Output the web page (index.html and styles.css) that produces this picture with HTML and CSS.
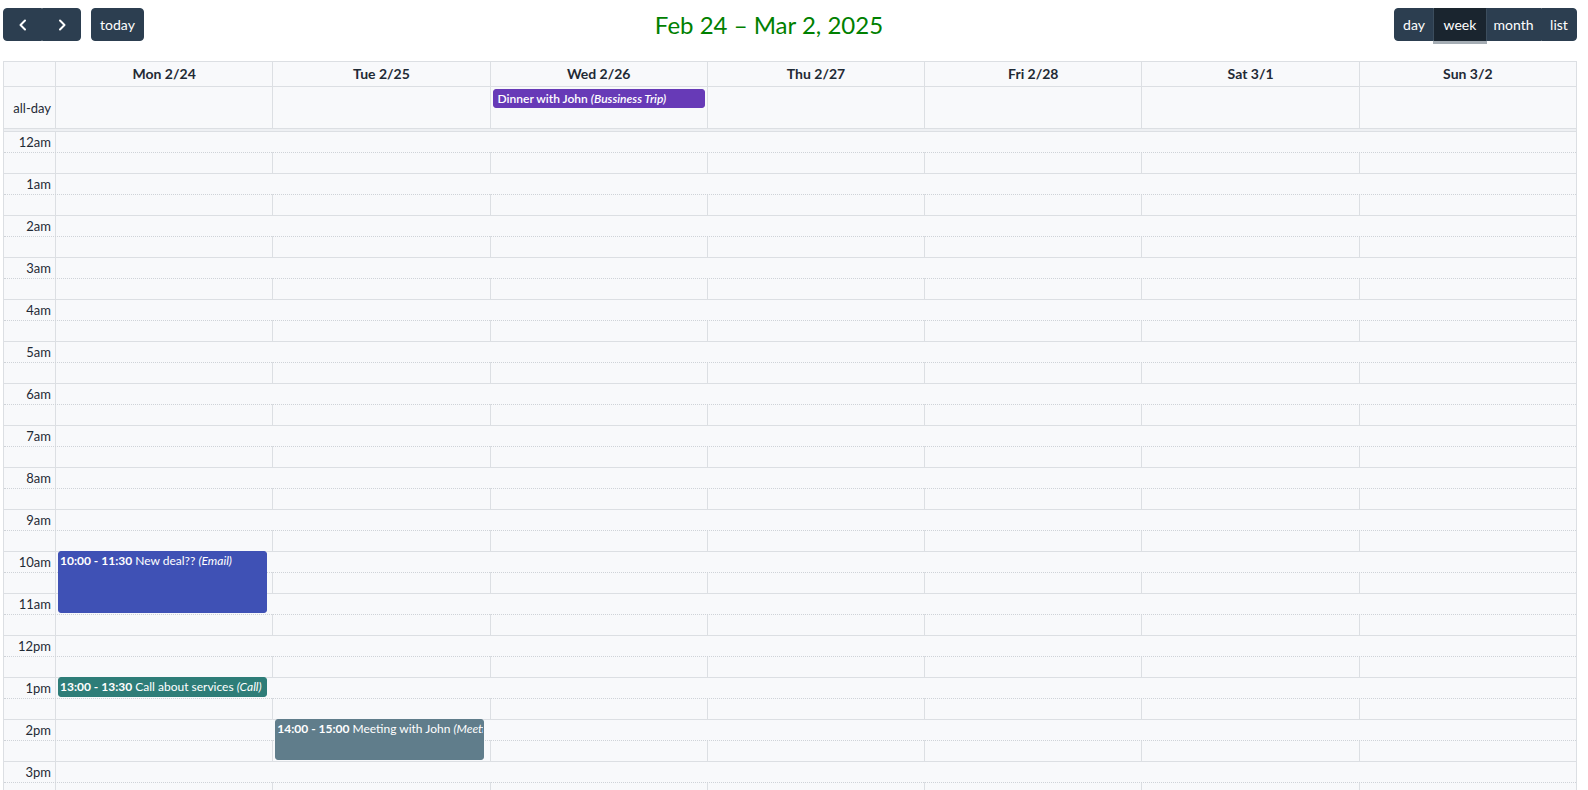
FILE: index.html
```html
<!DOCTYPE html>
<html lang="en">
<head>
<meta charset="utf-8">
<title>Calendar – Week</title>
<link rel="stylesheet" href="styles.css">
</head>
<body>
<div class="page">
  <div class="toolbar">
    <div class="chunk">
      <div class="btn-group">
        <button class="btn btn-icon" aria-label="prev"><svg width="10" height="12" viewBox="0 0 10 12"><polyline points="7,1.5 2.5,6 7,10.5"/></svg></button>
        <button class="btn btn-icon" aria-label="next"><svg width="10" height="12" viewBox="0 0 10 12"><polyline points="3,1.5 7.5,6 3,10.5"/></svg></button>
      </div>
      <button class="btn btn-today">today</button>
    </div>
    <h2 class="title">Feb 24 – Mar 2, 2025</h2>
    <div class="btn-group">
      <button class="btn btn-day">day</button>
      <button class="btn btn-week active">week</button>
      <button class="btn btn-month">month</button>
      <button class="btn btn-list">list</button>
    </div>
  </div>

  <div class="cal">
    <div class="row head">
      <div class="axis"></div>
      <div class="cell day-head">Mon 2/24</div>
      <div class="cell day-head">Tue 2/25</div>
      <div class="cell day-head">Wed 2/26</div>
      <div class="cell day-head">Thu 2/27</div>
      <div class="cell day-head">Fri 2/28</div>
      <div class="cell day-head">Sat 3/1</div>
      <div class="cell day-head">Sun 3/2</div>
    </div>
    <div class="row allday">
      <div class="axis axis-label">all-day</div>
      <div class="cell"></div>
      <div class="cell"></div>
      <div class="cell"><div class="ad-event ev-purple">Dinner with John <i>(Bussiness Trip)</i></div></div>
      <div class="cell"></div>
      <div class="cell"></div>
      <div class="cell"></div>
      <div class="cell"></div>
    </div>
    <div class="divider"></div>

    <div class="tbody">
      <div class="layer cols">
        <div class="axis"></div>
        <div class="col-line"></div>
        <div class="col-line"></div>
        <div class="col-line"></div>
        <div class="col-line"></div>
        <div class="col-line"></div>
        <div class="col-line"></div>
        <div class="col-line"></div>
      </div>

      <div class="layer slots">
        <div class="slot major"><div class="slot-label">12am</div></div>
        <div class="slot minor"><div class="slot-label"></div></div>
        <div class="slot major"><div class="slot-label">1am</div></div>
        <div class="slot minor"><div class="slot-label"></div></div>
        <div class="slot major"><div class="slot-label">2am</div></div>
        <div class="slot minor"><div class="slot-label"></div></div>
        <div class="slot major"><div class="slot-label">3am</div></div>
        <div class="slot minor"><div class="slot-label"></div></div>
        <div class="slot major"><div class="slot-label">4am</div></div>
        <div class="slot minor"><div class="slot-label"></div></div>
        <div class="slot major"><div class="slot-label">5am</div></div>
        <div class="slot minor"><div class="slot-label"></div></div>
        <div class="slot major"><div class="slot-label">6am</div></div>
        <div class="slot minor"><div class="slot-label"></div></div>
        <div class="slot major"><div class="slot-label">7am</div></div>
        <div class="slot minor"><div class="slot-label"></div></div>
        <div class="slot major"><div class="slot-label">8am</div></div>
        <div class="slot minor"><div class="slot-label"></div></div>
        <div class="slot major"><div class="slot-label">9am</div></div>
        <div class="slot minor"><div class="slot-label"></div></div>
        <div class="slot major"><div class="slot-label">10am</div></div>
        <div class="slot minor"><div class="slot-label"></div></div>
        <div class="slot major"><div class="slot-label">11am</div></div>
        <div class="slot minor"><div class="slot-label"></div></div>
        <div class="slot major"><div class="slot-label">12pm</div></div>
        <div class="slot minor"><div class="slot-label"></div></div>
        <div class="slot major"><div class="slot-label">1pm</div></div>
        <div class="slot minor"><div class="slot-label"></div></div>
        <div class="slot major"><div class="slot-label">2pm</div></div>
        <div class="slot minor"><div class="slot-label"></div></div>
        <div class="slot major"><div class="slot-label">3pm</div></div>
        <div class="slot minor"><div class="slot-label"></div></div>
        <div class="slot major"><div class="slot-label">4pm</div></div>
        <div class="slot minor"><div class="slot-label"></div></div>
      </div>

      <div class="layer events">
        <div class="axis"></div>
        <div class="ev-col">
          <div class="ev ev-blue" style="top:420px;height:62px"><b>10:00 - 11:30</b> New deal?? <i>(Email)</i></div>
          <div class="ev ev-teal" style="top:546px;height:20px"><b>13:00 - 13:30</b> Call about services <i>(Call)</i></div>
        </div>
        <div class="ev-col">
          <div class="ev ev-gray" style="top:588px;height:41px"><b>14:00 - 15:00</b> Meeting with John <i>(Meeting)</i></div>
        </div>
        <div class="ev-col"></div>
        <div class="ev-col"></div>
        <div class="ev-col"></div>
        <div class="ev-col"></div>
        <div class="ev-col"></div>
      </div>
    </div>
  </div>
</div>
</body>
</html>
```

FILE: styles.css
```css
* { box-sizing: border-box; }

html, body {
  margin: 0;
  height: 100%;
  overflow: hidden;
  background: #fff;
}

body {
  font-family: Lato, "Noto Sans", "Liberation Sans", sans-serif;
  color: #1f2a35;
}

.page {
  padding: 8px 11px 0 3px;
}

/* ---------- toolbar ---------- */
.toolbar {
  display: flex;
  justify-content: space-between;
  align-items: center;
  height: 33px;
  margin-bottom: 20px;
}

.chunk {
  display: flex;
  gap: 10px;
}

.btn-group {
  display: flex;
}

.btn {
  font-family: inherit;
  font-size: 14px;
  line-height: 21px;
  height: 33px;
  padding: 0;
  background: #2c3e50;
  color: #fff;
  border: 1px solid #2c3e50;
  border-radius: 4px;
  display: flex;
  align-items: center;
  justify-content: center;
}

.btn-group .btn { border-radius: 0; }
.btn-group .btn:first-child { border-top-left-radius: 4px; border-bottom-left-radius: 4px; }
.btn-group .btn:last-child { border-top-right-radius: 4px; border-bottom-right-radius: 4px; }

.btn-icon { width: 39px; }
.btn-icon svg { fill: none; stroke: #fff; stroke-width: 2; stroke-linecap: round; stroke-linejoin: round; }

.btn-today { width: 53px; }
.btn-day { width: 40px; }
.btn-week { width: 52px; }
.btn-month { width: 55px; }
.btn-list { width: 36px; }

.btn.active {
  background: #1a252f;
  border-color: #1a252f;
  position: relative;
  z-index: 1;
  box-shadow: 0 2px 0 1px rgba(76, 91, 106, 0.5);
}

.title {
  margin: 0;
  font-size: 24px;
  font-weight: 400;
  color: #008000;
  line-height: 33px;
}

/* ---------- calendar ---------- */
.cal {
  border: 1px solid #dcdfe3;
  background: #f8f9fb;
}

.row {
  display: grid;
  grid-template-columns: 51px repeat(7, 1fr);
  border-bottom: 1px solid #dcdfe3;
}

.head { height: 25px; }
.allday { height: 42px; }

.cell {
  border-left: 1px solid #dcdfe3;
  min-width: 0;
}

.day-head {
  font-size: 14px;
  font-weight: 700;
  text-align: center;
  line-height: 24px;
  color: #1f2a35;
}

.axis-label {
  font-size: 13px;
  text-align: right;
  padding-right: 4px;
  display: flex;
  align-items: center;
  justify-content: flex-end;
  color: #1f2a35;
}

.ad-event {
  margin: 2px 2px 0 2px;
  height: 19px;
  border-radius: 3px;
  color: #fff;
  font-size: 12px;
  font-weight: 600;
  line-height: 17px;
  padding: 0 4px;
  white-space: nowrap;
  overflow: hidden;
}

.divider {
  height: 2px;
  background: #eef0f3;
}

.tbody {
  display: grid;
  grid-template-columns: 1fr;
  overflow: hidden;
}

.layer {
  grid-area: 1 / 1;
}

.cols, .events {
  display: grid;
  grid-template-columns: 51px repeat(7, 1fr);
}

.col-line {
  border-left: 1px solid #dcdfe3;
}

.slots {
  display: flex;
  flex-direction: column;
}

.slot {
  height: 21px;
  display: flex;
}

.slot.major {
  border-top: 1px solid #dcdfe3;
  background: #f8f9fb;
}

.slot.minor {
  border-top: 1px dotted #cfd3d8;
}

.slot-label {
  width: 52px;
  flex: none;
  border-right: 1px solid #dcdfe3;
  font-size: 13px;
  text-align: right;
  padding-right: 4px;
  line-height: 20px;
  color: #1f2a35;
}

.events {
  pointer-events: none;
}

.ev-col {
  position: relative;
  margin: 0 2.5% 0 2px;
  padding-left: 1px;
}

.ev {
  position: absolute;
  left: 1px;
  right: 0;
  border: 1px solid;
  border-radius: 3px;
  color: #fff;
  font-size: 12px;
  line-height: 15px;
  padding: 1px;
  white-space: nowrap;
  overflow: hidden;
}

.ev b { font-weight: 700; }
.ev i, .ad-event i { font-style: italic; }

.ev-blue { background: #3f51b5; border-color: #3f51b5; }
.ev-teal { background: #2e7d78; border-color: #2e7d78; }
.ev-gray { background: #607d8b; border-color: #607d8b; }
.ev-purple { background: #673ab7; border: 1px solid #673ab7; }
```
